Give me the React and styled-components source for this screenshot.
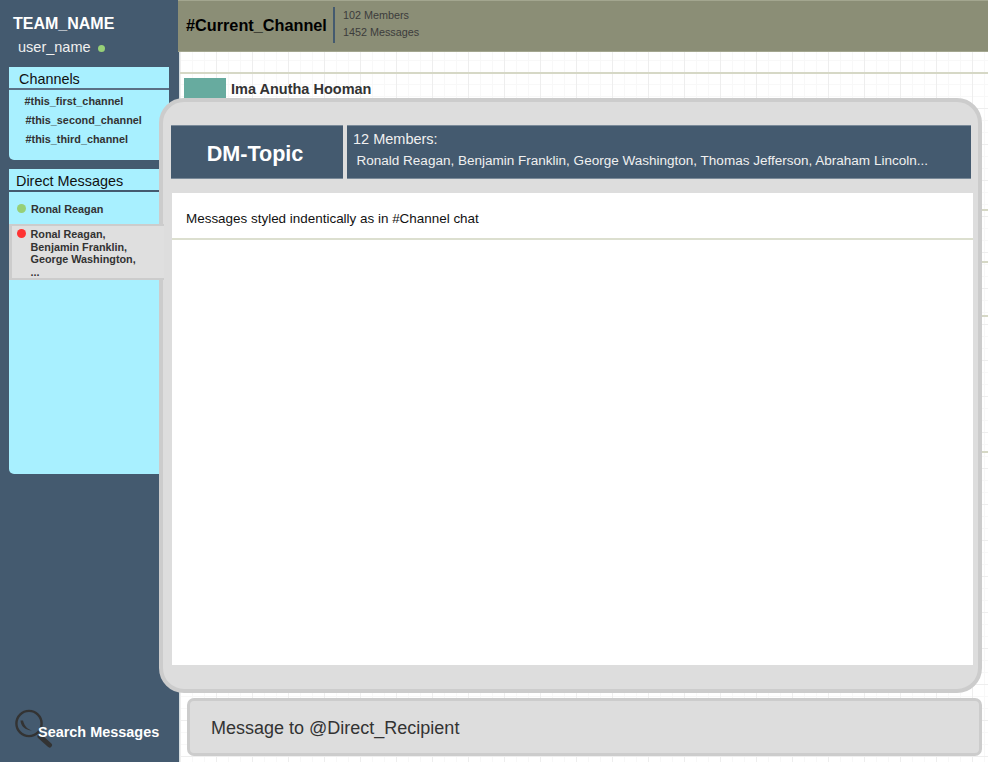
import styled, { createGlobalStyle } from "styled-components";

const GlobalStyle = createGlobalStyle`
  html, body {
    margin: 0;
    padding: 0;
    overflow: hidden;
    font-family: "Liberation Sans", Arial, sans-serif;
  }
  * {
    box-sizing: border-box;
  }
`;

const channels = [
  { name: "#this_first_channel", indent: 15.5 },
  { name: "#this_second_channel", indent: 16.5 },
  { name: "#this_third_channel", indent: 16.5 },
];

const feedRows = [137, 52, 54, 138];

const SearchIcon = () => (
  <SearchSvg width="40" height="40" viewBox="0 0 40 40">
    <circle cx="16" cy="14.5" r="12.6" fill="none" stroke="#333" strokeWidth="2.4" />
    <path d="M7.5 11.5c0.5 6 4.5 9.5 11.5 10c-4-1-7.5-4-9-10z" fill="#333" />
    <path d="M27 27.5l9.5 8.5" stroke="#333" strokeWidth="5" strokeLinecap="round" />
  </SearchSvg>
);

const App = () => {
  return (
    <Page>
      <GlobalStyle />
      <Sidebar>
        <TeamName>TEAM_NAME</TeamName>
        <UserName>
          user_name <UserDot />
        </UserName>
        <ChannelPanel>
          <ChannelTitle>Channels</ChannelTitle>
          <ChannelList>
            {channels.map((c) => (
              <ChannelItem key={c.name} $indent={c.indent}>
                {c.name}
              </ChannelItem>
            ))}
          </ChannelList>
        </ChannelPanel>
        <DmPanel>
          <DmTitle>Direct Messages</DmTitle>
          <DmRow>
            <StatusDot $color="#97d077" />
            Ronal Reagan
          </DmRow>
          <ActiveDmRow>
            <StatusDot $color="#ff3333" />
            <ActiveNames>
              Ronal Reagan,
              <br />
              Benjamin Franklin,
              <br />
              George Washington,
              <br />
              ...
            </ActiveNames>
          </ActiveDmRow>
        </DmPanel>
        <SearchRow>
          <SearchIcon />
          <SearchLabel>Search Messages</SearchLabel>
        </SearchRow>
      </Sidebar>

      <Main>
        <ChannelHeader>
          <ChannelName>#Current_Channel</ChannelName>
          <ChannelStats>
            <StatLine>102 Members</StatLine>
            <StatLine>1452 Messages</StatLine>
          </ChannelStats>
        </ChannelHeader>
        <Feed>
          {feedRows.map((h, i) => (
            <FeedRow key={i} $height={h}>
              {i === 0 && (
                <>
                  <Avatar />
                  <AuthorName>Ima Anutha Hooman</AuthorName>
                </>
              )}
            </FeedRow>
          ))}
        </Feed>
        <Composer>Message to @Direct_Recipient</Composer>
      </Main>

      <Modal>
        <ModalHeader>
          <TopicBox>DM-Topic</TopicBox>
          <MembersBox>
            <MembersCount>12 Members:</MembersCount>
            <MembersNames>
              Ronald Reagan, Benjamin Franklin, George Washington, Thomas Jefferson, Abraham Lincoln...
            </MembersNames>
          </MembersBox>
        </ModalHeader>
        <ModalBody>
          <ModalNote>Messages styled indentically as in #Channel chat</ModalNote>
        </ModalBody>
      </Modal>
    </Page>
  );
};

export default App;

const Page = styled.div`
  position: relative;
  display: flex;
  width: 988px;
  height: 762px;
  overflow: hidden;
  background-color: #fff;
  background-image: linear-gradient(#eeeeee 1px, transparent 1px),
    linear-gradient(90deg, #eeeeee 1px, transparent 1px),
    linear-gradient(#f8f8f8 1px, transparent 1px),
    linear-gradient(90deg, #f8f8f8 1px, transparent 1px);
  background-size: 36px 36px, 36px 36px, 12px 12px, 12px 12px;
`;

const Sidebar = styled.aside`
  display: flex;
  flex-direction: column;
  flex: 0 0 180px;
  height: 762px;
  padding: 14px 0 0 9px;
  background: #445a6f;
  border-right: 1px solid #d5dde0;
`;

const TeamName = styled.div`
  margin-left: 4px;
  font-size: 16px;
  line-height: 20px;
  font-weight: 700;
  color: #fff;
`;

const UserName = styled.div`
  display: flex;
  align-items: center;
  gap: 7px;
  margin: 6px 0 0 9px;
  font-size: 14.5px;
  line-height: 15px;
  color: #f0f0f0;
`;

const UserDot = styled.span`
  width: 7px;
  height: 7px;
  margin-top: 2px;
  border-radius: 50%;
  background: #97d077;
`;

const ChannelPanel = styled.section`
  width: 160px;
  height: 93px;
  margin-top: 12px;
  background: #a8f0ff;
  border-bottom-left-radius: 5px;
`;

const ChannelTitle = styled.div`
  height: 23px;
  padding: 4px 0 0 10px;
  font-size: 14.4px;
  line-height: 17px;
  color: #111;
  border-bottom: 2px solid #5a7085;
`;

const ChannelList = styled.ul`
  display: flex;
  flex-direction: column;
  gap: 6px;
  margin: 0;
  padding: 5px 0 0;
  list-style: none;
`;

const ChannelItem = styled.li`
  padding-left: ${(props) => props.$indent}px;
  font-size: 10.85px;
  line-height: 13px;
  font-weight: 700;
  color: #333;
`;

const DmPanel = styled.section`
  width: 160px;
  height: 305px;
  margin-top: 9px;
  background: #a8f0ff;
  border-bottom-left-radius: 5px;
`;

const DmTitle = styled.div`
  height: 23px;
  padding: 4px 0 0 7px;
  font-size: 14.4px;
  line-height: 17px;
  color: #111;
  border-bottom: 2px solid #445a6f;
`;

const DmRow = styled.div`
  display: flex;
  align-items: flex-start;
  height: 32px;
  padding: 11px 0 0 8px;
  font-size: 10.85px;
  line-height: 13px;
  font-weight: 700;
  color: #333;
`;

const StatusDot = styled.span`
  flex: 0 0 9px;
  width: 9px;
  height: 9px;
  margin: 1px 5px 0 0;
  border-radius: 50%;
  background: ${(props) => props.$color};
`;

const ActiveDmRow = styled.div`
  position: relative;
  z-index: 2;
  display: flex;
  align-items: flex-start;
  width: 155px;
  height: 56px;
  padding: 2px 0 0 5px;
  background: #dfdfdf;
  border: solid #cccccc;
  border-width: 2px 0 2px 3px;
  font-size: 10.8px;
  line-height: 12.5px;
  font-weight: 700;
  color: #333;
`;

const ActiveNames = styled.div`
  margin-left: -0.5px;
`;

const SearchRow = styled.div`
  display: flex;
  align-items: center;
  height: 40px;
  margin: auto 0 13px 5px;
`;

const SearchSvg = styled.svg`
  flex: 0 0 40px;
  margin-left: -1px;
`;

const SearchLabel = styled.span`
  margin: 6px 0 0 -15px;
  font-size: 14.45px;
  font-weight: 700;
  color: #fff;
  white-space: nowrap;
`;

const Main = styled.main`
  display: flex;
  flex-direction: column;
  flex: 1;
  min-width: 0;
  height: 762px;
  margin-left: -2px;
`;

const ChannelHeader = styled.header`
  display: flex;
  align-items: center;
  flex: 0 0 52px;
  padding: 0 0 2px 8px;
  background: #8b8e76;
  border-top: 1px solid #a3a68f;
  border-bottom: 1px solid #a3a68f;
`;

const ChannelName = styled.h1`
  margin: 0 6px 0 0;
  font-size: 16.25px;
  font-weight: 700;
  color: #000;
`;

const ChannelStats = styled.div`
  display: flex;
  flex-direction: column;
  justify-content: center;
  gap: 4px;
  height: 36px;
  padding: 0 0 2px 8px;
  border-left: 2px solid #445a6f;
`;

const StatLine = styled.div`
  font-size: 10.8px;
  line-height: 13px;
  color: #3c3c3c;
`;

const Feed = styled.div`
  flex: 1;
  min-height: 0;
  margin-left: 2px;
  padding-top: 20px;
`;

const FeedRow = styled.div`
  display: flex;
  align-items: flex-start;
  height: ${(props) => props.$height}px;
  padding: 4px 0 0 4px;
  border-top: 2px solid #d6d8c6;
  &:last-child {
    border-bottom: 2px solid #d6d8c6;
  }
`;

const Avatar = styled.div`
  width: 42px;
  height: 42px;
  background: #67ab9f;
`;

const AuthorName = styled.div`
  margin: 2px 0 0 5px;
  font-size: 14.5px;
  line-height: 18px;
  font-weight: 700;
  color: #333;
`;

const Composer = styled.div`
  display: flex;
  align-items: center;
  height: 58px;
  margin: 0 6px 6px 9px;
  padding: 2px 0 0 21px;
  background: #dddddd;
  border: 3px solid #cccccc;
  border-radius: 7px;
  font-size: 18px;
  color: #333;
`;

const Modal = styled.div`
  position: absolute;
  z-index: 1;
  top: 98px;
  left: 159px;
  display: flex;
  flex-direction: column;
  width: 823px;
  height: 595px;
  padding: 23px 5px 24px 8px;
  background: #dddddd;
  border: 4px solid #cccccc;
  border-radius: 25px;
`;

const ModalHeader = styled.div`
  display: flex;
  gap: 4px;
  flex: 0 0 54px;
  margin-right: 2px;
`;

const TopicBox = styled.div`
  display: flex;
  align-items: center;
  justify-content: center;
  flex: 0 0 172px;
  padding: 3px 4px 0 0;
  background: #445a6f;
  border-top: 1px solid #7a8a99;
  border-bottom: 1px solid #7a8a99;
  font-size: 21.6px;
  font-weight: 700;
  color: #fff;
`;

const MembersBox = styled.div`
  flex: 1;
  min-width: 0;
  padding: 5px 0 0 6px;
  background: #445a6f;
  border-top: 1px solid #7a8a99;
  border-bottom: 1px solid #7a8a99;
  color: #f0f0f0;
`;

const MembersCount = styled.div`
  font-size: 14.5px;
  line-height: 17px;
`;

const MembersNames = styled.div`
  margin: 5px 0 0 3.5px;
  font-size: 13.52px;
  line-height: 16px;
  white-space: nowrap;
`;

const ModalBody = styled.div`
  flex: 1;
  margin: 14px 0 0 1px;
  background: #fff;
`;

const ModalNote = styled.div`
  height: 47px;
  padding: 18px 0 0 14px;
  font-size: 13.45px;
  line-height: 16px;
  color: #111;
  border-bottom: 2px solid #dcdfcf;
`;
